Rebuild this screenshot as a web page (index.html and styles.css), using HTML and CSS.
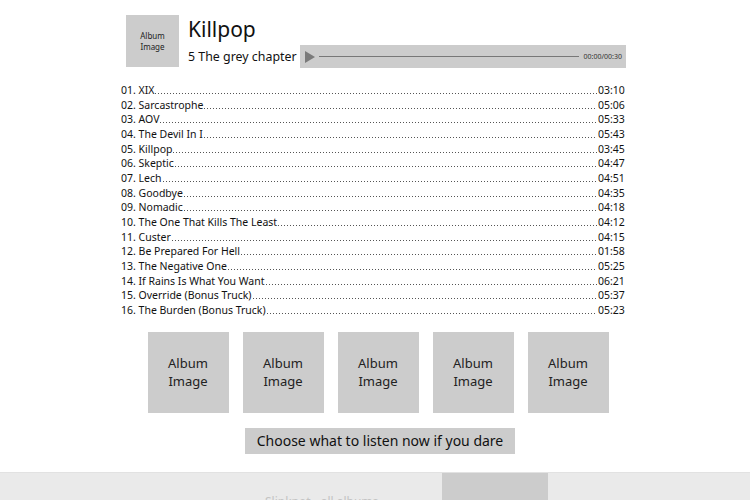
FILE: index.html
```html
<!DOCTYPE html>
<html lang="en">
<head>
  <meta charset="UTF-8" />
  <title>Killpop | 5 The grey chapter</title>
  <link rel="stylesheet" href="styles.css">
</head>
<body>

  <main class="player">
    <header class="album-head">
      <div class="cover cover-small">Album<br>Image</div>
      <div class="album-info">
        <h1>Killpop</h1>
        <div class="album-row">
          <span class="album-name">5 The grey chapter</span>
          <div class="audio">
            <svg class="play" width="10" height="12" viewBox="0 0 10 12"><path d="M0 0 L10 6 L0 12 Z" fill="#7a7a7a"/></svg>
            <div class="audio-line"></div>
            <span class="audio-time">00:00/00:30</span>
          </div>
        </div>
      </div>
    </header>

    <ul class="tracks">
      <li><span>01. XIX</span><i></i><span>03:10</span></li>
      <li><span>02. Sarcastrophe</span><i></i><span>05:06</span></li>
      <li><span>03. AOV</span><i></i><span>05:33</span></li>
      <li><span>04. The Devil In I</span><i></i><span>05:43</span></li>
      <li><span>05. Killpop</span><i></i><span>03:45</span></li>
      <li><span>06. Skeptic</span><i></i><span>04:47</span></li>
      <li><span>07. Lech</span><i></i><span>04:51</span></li>
      <li><span>08. Goodbye</span><i></i><span>04:35</span></li>
      <li><span>09. Nomadic</span><i></i><span>04:18</span></li>
      <li><span>10. The One That Kills The Least</span><i></i><span>04:12</span></li>
      <li><span>11. Custer</span><i></i><span>04:15</span></li>
      <li><span>12. Be Prepared For Hell</span><i></i><span>01:58</span></li>
      <li><span>13. The Negative One</span><i></i><span>05:25</span></li>
      <li><span>14. If Rains Is What You Want</span><i></i><span>06:21</span></li>
      <li><span>15. Override (Bonus Truck)</span><i></i><span>05:37</span></li>
      <li><span>16. The Burden (Bonus Truck)</span><i></i><span>05:23</span></li>
    </ul>

    <div class="others">
      <div class="cover">Album<br>Image</div>
      <div class="cover">Album<br>Image</div>
      <div class="cover">Album<br>Image</div>
      <div class="cover">Album<br>Image</div>
      <div class="cover">Album<br>Image</div>
    </div>

    <div class="choose">
      <button type="button">Choose what to listen now if you dare</button>
    </div>
  </main>

  <footer class="bottom-bar">
    <span class="bottom-text">Slipknot - all albums</span>
    <span class="bottom-tab"></span>
  </footer>

</body>
</html>
```

FILE: styles.css
```css
body {
  font-family: "Noto Sans", "Open Sans", sans-serif;
  background: #fff;
  margin: 0;
  padding: 0;
  color: #111;
  overflow: hidden;
}

.player {
  width: 502px;
  margin: 0 auto;
  padding-top: 15px;
}

.album-head {
  display: flex;
  align-items: flex-start;
  margin-left: 2px;
}

.cover {
  width: 81px;
  height: 81px;
  background: #cccccc;
  display: flex;
  align-items: center;
  justify-content: center;
  text-align: center;
  font-size: 13px;
  line-height: 18px;
  color: #222;
}

.cover-small {
  width: 53px;
  height: 52px;
  font-size: 8px;
  line-height: 11px;
  flex-shrink: 0;
}

.album-info {
  margin-left: 9px;
  flex: 1;
}

.album-info h1 {
  margin: 0;
  font-weight: normal;
  font-size: 21px;
  line-height: 28px;
  height: 30px;
}

.album-row {
  display: flex;
  align-items: center;
}

.album-name {
  font-size: 12.4px;
  white-space: nowrap;
}

.audio {
  flex: 1;
  height: 23px;
  margin-left: 3px;
  background: #cccccc;
  display: flex;
  align-items: center;
  padding: 0 4px 0 5px;
}

.play {
  flex-shrink: 0;
}

.audio-line {
  flex: 1;
  height: 1px;
  background: #777;
  margin: 0 5px 0 4px;
}

.audio-time {
  font-size: 7px;
  color: #333;
}

.tracks {
  list-style: none;
  padding: 0;
  margin: 15px 0 0 -3px;
  font-size: 10.5px;
  line-height: 14.67px;
}

.tracks li {
  display: flex;
  align-items: baseline;
}

.tracks li i {
  flex: 1;
  height: 1px;
  margin: 0 1px;
  background-image: linear-gradient(to right, #555 1px, transparent 1px);
  background-size: 3px 1px;
  background-repeat: repeat-x;
}

.tracks li span:last-child {
  width: 28px;
}

.others {
  display: flex;
  justify-content: center;
  gap: 14px;
  margin-top: 14px;
  margin-left: 6px;
}

.choose {
  text-align: center;
  margin-top: 15px;
  margin-left: 10px;
}

.choose button {
  font-family: inherit;
  font-size: 14px;
  color: #111;
  background: #cccccc;
  border: none;
  border-radius: 0;
  height: 26px;
  padding: 0 12px;
}

.bottom-bar {
  position: fixed;
  left: 0;
  right: 0;
  top: 472px;
  height: 40px;
  background: #eaeaea;
  border-top: 1px solid #e2e2e2;
}

.bottom-text {
  position: absolute;
  left: 265px;
  top: 20px;
  font-size: 12px;
  color: #c4c4c4;
}

.bottom-tab {
  position: absolute;
  left: 442px;
  top: 0;
  width: 106px;
  height: 40px;
  background: #cccccc;
}
```
